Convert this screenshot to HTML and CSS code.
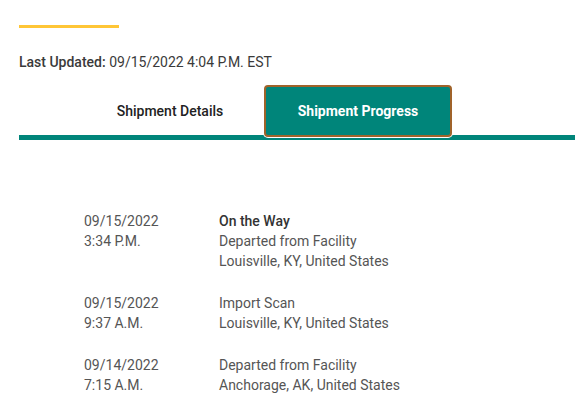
FILE: index.html
```html
<!DOCTYPE html>
<html>
<head>
<meta charset="utf-8">
<link rel="stylesheet" href="styles.css">
</head>
<body>
<div class="page">
  <div class="accent"></div>
  <p class="updated"><span class="label">Last Updated:</span> 09/15/2022 4:04 P.M. EST</p>
  <div class="tabs">
    <div class="tab">Shipment Details</div>
    <div class="tab active">Shipment Progress</div>
  </div>
  <div class="timeline">
    <div class="event">
      <div class="when">09/15/2022<br>3:34 P.M.</div>
      <div class="what"><span class="status">On the Way</span><br>Departed from Facility<br>Louisville, KY, United States</div>
    </div>
    <div class="event">
      <div class="when">09/15/2022<br>9:37 A.M.</div>
      <div class="what">Import Scan<br>Louisville, KY, United States</div>
    </div>
    <div class="event">
      <div class="when">09/14/2022<br>7:15 A.M.</div>
      <div class="what">Departed from Facility<br>Anchorage, AK, United States</div>
    </div>
  </div>
</div>
</body>
</html>
```
FILE: styles.css
```css
* { box-sizing: border-box; }
html, body { margin: 0; padding: 0; background: #fff; }
body { font-family: Roboto, "Liberation Sans", sans-serif; color: #333; }
.page { padding: 25px 0 0 19px; }
.accent { width: 100px; height: 3px; background: #ffc636; }
.updated { margin: 24px 0 0; font-size: 14px; line-height: 20px; color: #3a3a3a; }
.updated .label { font-weight: 500; }
.tabs { display: flex; margin-top: 13px; padding-left: 57px; border-bottom: 5px solid #00857a; height: 55px; }
.tab { width: 188px; height: 52px; display: flex; align-items: center; justify-content: center; font-size: 14px; font-weight: 500; color: #222; }
.tab.active { background: #00857a; color: #fff; font-weight: 700; border: 2px solid #a0632a; border-radius: 4px; box-shadow: 0 0 0 1px #fff; position: relative; z-index: 1; }
.timeline { padding: 71px 0 0 65px; font-size: 14px; line-height: 20px; color: #555; }
.event { display: flex; margin-bottom: 22px; }
.when { width: 135px; }
.status { font-weight: 500; color: #333; }
```
